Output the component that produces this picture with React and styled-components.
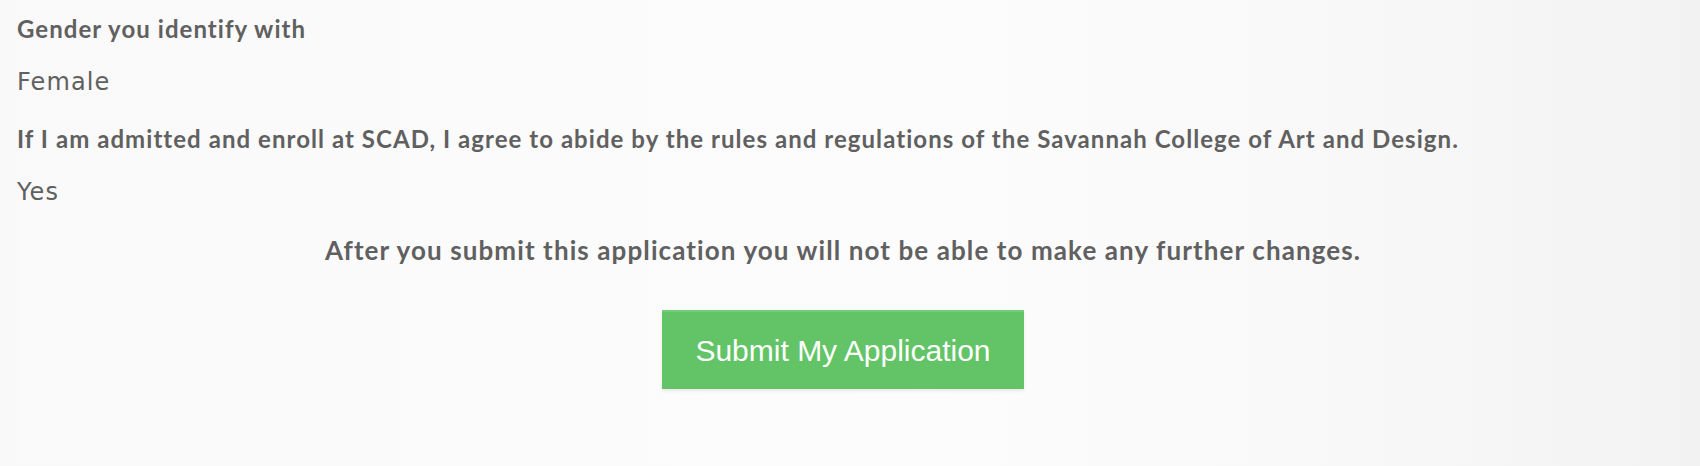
import styled, { createGlobalStyle } from "styled-components";

const GlobalStyle = createGlobalStyle`
  html, body {
    margin: 0;
    padding: 0;
  }
  body {
    width: 1700px;
    height: 466px;
    overflow: hidden;
    background: linear-gradient(90deg, #f9f9f9 0%, #fbfbfb 30%, #fcfcfc 55%, #f8f8f8 80%, #f2f2f2 100%);
    font-family: "Lato", "Liberation Sans", sans-serif;
    color: #606060;
  }
`;

const Page = styled.div`
  display: flex;
  flex-direction: column;
  padding: 14px 31px 0 17px;
`;

const Field = styled.div`
  display: flex;
  flex-direction: column;
  gap: 23px;
  margin-bottom: 27px;
`;

const Label = styled.div`
  font-size: 24px;
  line-height: 30px;
  font-weight: 700;
  letter-spacing: 1.05px;
  white-space: nowrap;
`;

const Value = styled.div`
  font-family: "DejaVu Sans", sans-serif;
  font-size: 24px;
  line-height: 30px;
  font-weight: 400;
  letter-spacing: 1.1px;
`;

const Notice = styled.div`
  margin-top: 1px;
  font-size: 26px;
  line-height: 30px;
  font-weight: 700;
  letter-spacing: 1.1px;
  text-align: center;
  white-space: nowrap;
`;

const Actions = styled.div`
  display: flex;
  justify-content: center;
  margin-top: 45px;
`;

const SubmitButton = styled.button`
  width: 362px;
  height: 79px;
  border: none;
  border-top: 2px solid #73cc76;
  background: #62c466;
  color: #ffffff;
  font: 400 30px "Liberation Sans", Arial, sans-serif;
  box-shadow: 0 2px 3px rgba(0, 0, 0, 0.08);
  cursor: pointer;
`;

const fields = [
  { label: "Gender you identify with", value: "Female" },
  {
    label:
      "If I am admitted and enroll at SCAD, I agree to abide by the rules and regulations of the Savannah College of Art and Design.",
    value: "Yes",
  },
];

const App = () => {
  return (
    <>
      <GlobalStyle />
      <Page>
        {fields.map((f) => (
          <Field key={f.label}>
            <Label>{f.label}</Label>
            <Value>{f.value}</Value>
          </Field>
        ))}
        <Notice>
          After you submit this application you will not be able to make any
          further changes.
        </Notice>
        <Actions>
          <SubmitButton>Submit My Application</SubmitButton>
        </Actions>
      </Page>
    </>
  );
};

export default App;
